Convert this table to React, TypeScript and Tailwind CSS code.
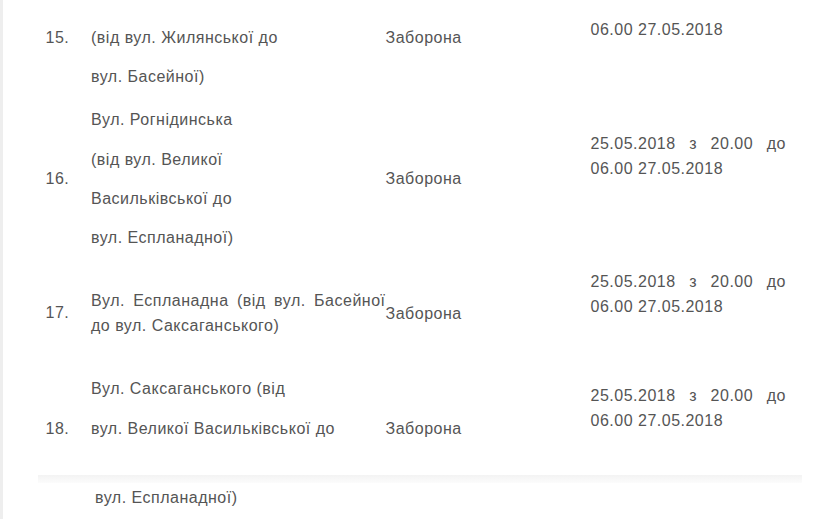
const cols = "grid grid-cols-[45.5px_294.5px_205px_195.5px] items-start ml-[42.5px]";

const Line = ({ children, first }: { children: React.ReactNode; first?: boolean }) => (
    <p className={first ? "leading-[25px]" : "leading-[25px] mt-[14.3px]"}>{children}</p>
);

const Justified = ({ children }: { children: React.ReactNode }) => (
    <p className="leading-[25px] text-justify [text-align-last:justify]">{children}</p>
);

export default function App() {
    return (
        <div className="flex h-[519px] overflow-hidden bg-white text-[#555555] text-[16px] tracking-[0.5px] font-['Liberation_Sans',Arial,sans-serif]">
            <div className="w-[3px] shrink-0 bg-[#eeeeee]" />
            <div className="flex-1 pt-[25px]">
                {/* 15 */}
                <div className={cols}>
                    <div className="leading-[25px]">15.</div>
                    <div>
                        <Line first>(від вул. Жилянської до</Line>
                        <Line>вул. Басейної)</Line>
                    </div>
                    <div className="leading-[25px]">Заборона</div>
                    <div className="leading-[25px] -mt-[8px]">06.00 27.05.2018</div>
                </div>

                {/* 16 */}
                <div className={cols + " mt-[18px]"}>
                    <div className="leading-[25px] mt-[59px]">16.</div>
                    <div>
                        <Line first>Вул. Рогнідинська</Line>
                        <Line>(від вул. Великої</Line>
                        <Line>Васильківської до</Line>
                        <Line>вул. Еспланадної)</Line>
                    </div>
                    <div className="leading-[25px] mt-[58.5px]">Заборона</div>
                    <div className="mt-[24px]">
                        <Justified>25.05.2018 з 20.00 до</Justified>
                        <p className="leading-[25px]">06.00 27.05.2018</p>
                    </div>
                </div>

                {/* 17 */}
                <div className={cols + " mt-[37.8px]"}>
                    <div className="leading-[25px] mt-[11.6px]">17.</div>
                    <div>
                        <Justified>Вул. Еспланадна (від вул. Басейної</Justified>
                        <p className="leading-[25px]">до вул. Саксаганського)</p>
                    </div>
                    <div className="leading-[25px] mt-[13px]">Заборона</div>
                    <div className="-mt-[19.4px]">
                        <Justified>25.05.2018 з 20.00 до</Justified>
                        <p className="leading-[25px]">06.00 27.05.2018</p>
                    </div>
                </div>

                {/* 18 */}
                <div className={cols + " mt-[38.3px]"}>
                    <div className="leading-[25px] mt-[39.3px]">18.</div>
                    <div>
                        <Line first>Вул. Саксаганського (від</Line>
                        <Line>вул. Великої Васильківської до</Line>
                    </div>
                    <div className="leading-[25px] mt-[40px]">Заборона</div>
                    <div className="mt-[6.7px]">
                        <Justified>25.05.2018 з 20.00 до</Justified>
                        <p className="leading-[25px]">06.00 27.05.2018</p>
                    </div>
                </div>

                <div className="ml-[35px] w-[764px] h-[8px] mt-[33.6px] bg-gradient-to-b from-[#f3f3f3] to-[#fcfcfc]" />
                <p className="ml-[92px] mt-[1.8px] leading-[25px]">вул. Еспланадної)</p>
            </div>
        </div>
    );
}
